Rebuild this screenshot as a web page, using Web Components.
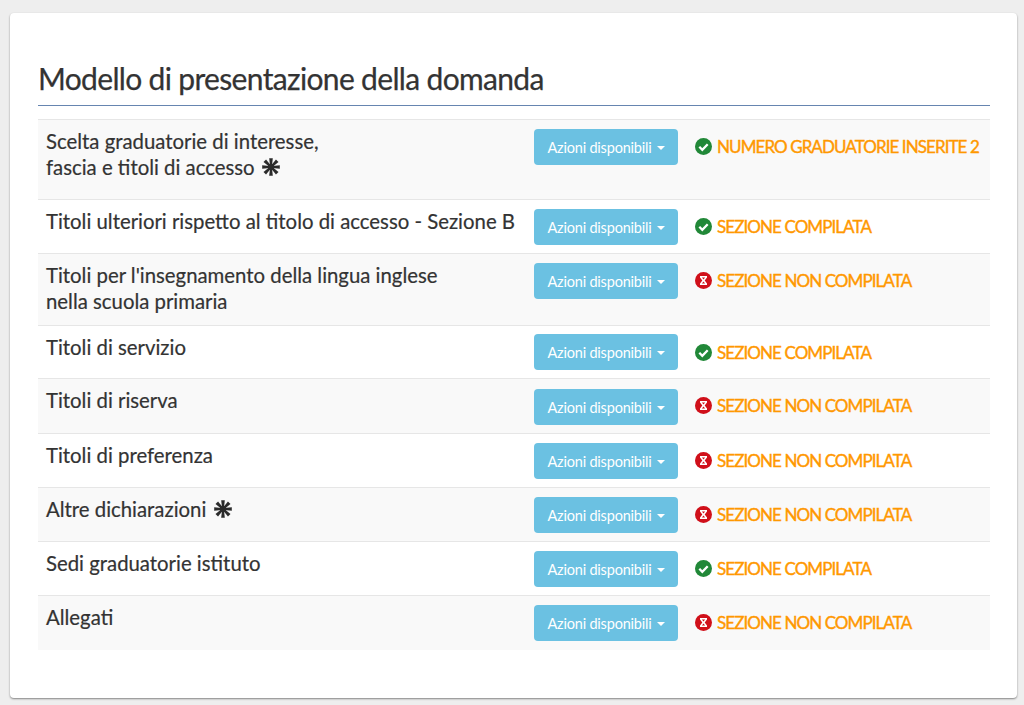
<!DOCTYPE html>
<html lang="it"><head><meta charset="utf-8"><title>Modello</title>
<style>
html,body{margin:0;padding:0;background:#eee;height:705px;overflow:hidden}
body{font-family:"Lato","Noto Sans",sans-serif;color:#333;display:flex;flex-direction:column;padding:13px 7px 7px 10px;box-sizing:border-box}
</style></head><body>
<app-card>
<h-title>Modello di presentazione della domanda</h-title>
<sec-table>
<sec-row h="80" status="ok" text="NUMERO GRADUATORIE INSERITE 2">Scelta graduatorie di interesse,<br>fascia e titoli di accesso <star-mark></star-mark></sec-row>
<sec-row h="54" status="ok" text="SEZIONE COMPILATA">Titoli ulteriori rispetto al titolo di accesso - Sezione B</sec-row>
<sec-row h="72" status="no" text="SEZIONE NON COMPILATA">Titoli per l'insegnamento della lingua inglese<br>nella scuola primaria</sec-row>
<sec-row h="53" btn="-1" status="ok" text="SEZIONE COMPILATA">Titoli di servizio</sec-row>
<sec-row h="55" btn="1" status="no" text="SEZIONE NON COMPILATA">Titoli di riserva</sec-row>
<sec-row h="54" status="no" text="SEZIONE NON COMPILATA">Titoli di preferenza</sec-row>
<sec-row h="54" status="no" text="SEZIONE NON COMPILATA">Altre dichiarazioni <star-mark></star-mark></sec-row>
<sec-row h="54" status="ok" text="SEZIONE COMPILATA">Sedi graduatorie istituto</sec-row>
<sec-row h="54" status="no" text="SEZIONE NON COMPILATA">Allegati</sec-row>
</sec-table>
</app-card>
<script>
class AppCard extends HTMLElement{constructor(){super();this.attachShadow({mode:'open'}).innerHTML=`<style>:host{display:block;height:685px;box-sizing:border-box;background:#fff;border-radius:4px;box-shadow:0 1px 2px rgba(0,0,0,.45);padding:46px 27px 0 28px}</style><slot></slot>`}}
class HTitle extends HTMLElement{constructor(){super();this.attachShadow({mode:'open'}).innerHTML=`<style>:host{display:block;height:46px;border-bottom:1px solid #6685b0;font-size:30px;line-height:38px;margin-bottom:13px;color:#333;letter-spacing:-.66px;-webkit-text-stroke:.25px #333;white-space:nowrap}</style><slot></slot>`}}
class SecTable extends HTMLElement{constructor(){super();this.attachShadow({mode:'open'}).innerHTML=`<style>:host{display:block;border-top:1px solid #e6e6e6}::slotted(sec-row:nth-child(odd)){background:#f9f9f9}::slotted(sec-row:last-child){border-bottom:0}</style><slot></slot>`}}
const arm='M7.2 .2h3.6l-.8 7.4H8z';
class StarMark extends HTMLElement{constructor(){super();const arms=[0,45,90,135,180,225,270,315].map(a=>`<path d="${arm}" transform="rotate(${a} 9 9)"/>`).join('');this.attachShadow({mode:'open'}).innerHTML=`<style>:host{display:inline-block;width:18px;height:18px;vertical-align:-1px;margin-left:2px}svg{display:block}</style><svg viewBox="0 0 18 18" width="18" height="18" fill="#2b2b2b">${arms}<circle cx="9" cy="9" r="3.2"/></svg>`}}
const ICONS={ok:`<svg viewBox="0 0 17 17" width="17" height="17"><circle cx="8.5" cy="8.5" r="8.5" fill="#218838"/><path d="M4.3 8.8l3 3 5.4-5.6" fill="none" stroke="#fff" stroke-width="2.3"/></svg>`,
no:`<svg viewBox="0 0 17 17" width="17" height="17"><circle cx="8.5" cy="8.5" r="8.5" fill="#d0101a"/><path d="M5 4h7v1.4l-2.3 3.1 2.3 3.1V13H5v-1.4l2.3-3.1L5 5.4z" fill="#fff"/><path d="M6.9 5.4h3.2L8.5 7.6z" fill="#d0101a"/><path d="M6.9 11.6h3.2L8.5 9.6z" fill="#d0101a"/></svg>`};
class SecRow extends HTMLElement{constructor(){super();const h=this.getAttribute('h'),s=this.getAttribute('status'),t=this.getAttribute('text'),b=this.getAttribute('btn')||0;this.attachShadow({mode:'open'}).innerHTML=`<style>
:host{display:grid;grid-template-columns:488px 161px 1fr;box-sizing:border-box;border-bottom:1px solid #e6e6e6;padding:9px 0 0 8px;align-items:start;font-size:20.35px;-webkit-text-stroke:.2px #333}
.l{line-height:26px;color:#333;white-space:nowrap;margin-top:-1px}
.b{width:144px;height:36px;margin-top:${b}px;box-sizing:border-box;background:#6bc1e2;color:#fff;border-radius:4px;font-size:14.5px;display:flex;align-items:center;justify-content:center;gap:5px;white-space:nowrap;letter-spacing:-.2px;-webkit-text-stroke:0}
.c{width:0;height:0;border-left:4px solid transparent;border-right:4px solid transparent;border-top:4px solid #fff;margin-top:1px}
.s{display:flex;align-items:center;gap:5px;height:36px;margin-top:-1px;color:#ff9800;font-size:17px;font-weight:400;white-space:nowrap;letter-spacing:-.92px;-webkit-text-stroke:.4px #ff9800}
svg{flex:none}
</style><div class="l"><slot></slot></div><div class="b">Azioni disponibili<span class="c"></span></div><div class="s">${ICONS[s]}<span>${t}</span></div>`;this.style.height=h+'px'}}
customElements.define('app-card',AppCard);customElements.define('h-title',HTitle);customElements.define('sec-table',SecTable);customElements.define('star-mark',StarMark);customElements.define('sec-row',SecRow);
</script>
</body></html>
